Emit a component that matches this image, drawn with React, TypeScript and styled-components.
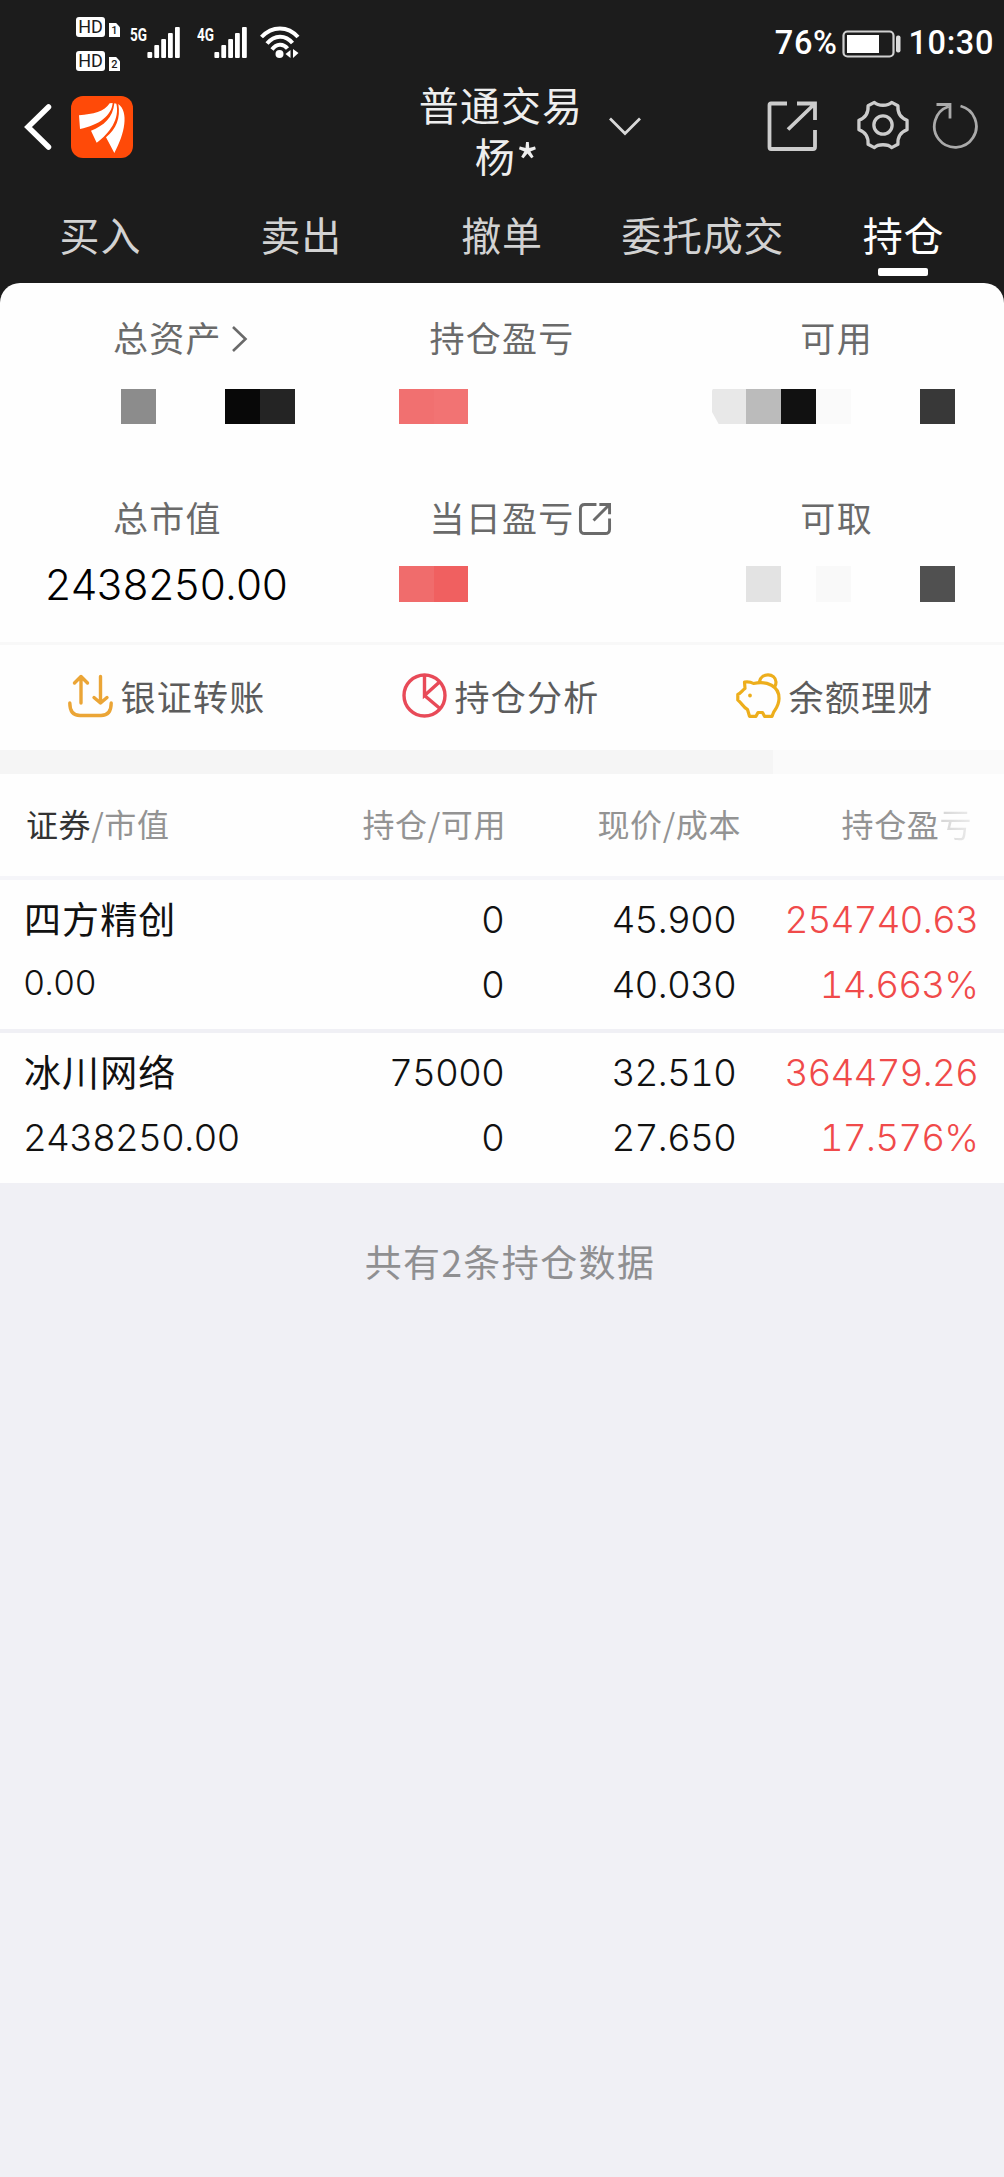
import React from "react";
import styled, { createGlobalStyle } from "styled-components";

const cjk = `"Noto Sans CJK SC", sans-serif`;
const digits = `Inter, "Noto Sans CJK SC", sans-serif`;

const GlobalStyle = createGlobalStyle`
  * { box-sizing: border-box; }
  body { margin: 0; background: #f0f0f5; }
`;

const Screen = styled.div`
  display: flex;
  flex-direction: column;
  width: 1004px;
  height: 2177px;
  overflow: hidden;
  background: #f0f0f5;
  font-family: ${cjk};
`;

const Top = styled.header`
  display: flex;
  flex-direction: column;
  height: 303px;
  flex: none;
  background: #1c1c1c;
  color: #fff;
`;

const StatusBar = styled.div`
  display: flex;
  justify-content: space-between;
  height: 80px;
  padding: 0 10px 0 76px;
`;

const StatusLeft = styled.div`
  display: flex;
  align-items: flex-start;
`;

const HdStack = styled.div`
  display: flex;
  flex-direction: column;
  gap: 14px;
  padding-top: 17px;
  margin-right: 10px;
`;

const HdLine = styled.div`
  display: flex;
  align-items: flex-end;
  gap: 4px;
  height: 20px;
`;

const HdBadge = styled.span`
  width: 29px;
  height: 20px;
  border-radius: 3px;
  background: #fff;
  color: #1c1c1c;
  font: 400 18px/20px Roboto, sans-serif;
  text-align: center;
`;

const SimBadge = styled.span`
  width: 11px;
  height: 14px;
  background: #fff;
  color: #1c1c1c;
  clip-path: polygon(0 0, 65% 0, 100% 30%, 100% 100%, 0 100%);
  font: 500 11px/15px Roboto, sans-serif;
  text-align: center;
`;

const StatusRight = styled.div`
  display: flex;
  align-items: center;
  height: 85px;
  font: 500 32.5px/38px Roboto, sans-serif;
  letter-spacing: 0.6px;
`;

const BatteryIcon = styled.svg`
  margin: 2px 8px 0 4px;
`;

const NavBar = styled.div`
  display: grid;
  grid-template-columns: 334px 334px 336px;
  height: 112px;
`;

const NavSide = styled.div`
  display: flex;
  align-items: flex-start;
`;

const BackIcon = styled.svg`
  margin: 24px 19px 0 24px;
`;

const LogoIcon = styled.svg`
  margin-top: 16px;
`;

const Title = styled.div`
  display: flex;
  flex-direction: column;
  align-items: center;
  font-size: 40px;
  line-height: 51px;
  letter-spacing: 1.1px;
  color: #eee;
`;

const TitleRow = styled.div`
  display: flex;
  height: 51px;
  margin-top: -1px;
`;

const TitleChevron = styled.svg`
  width: 34px;
  margin: 37px -59px 0 25px;
`;

const Owner = styled.span`
  padding-left: 13px;
`;

const Star = styled.span`
  font-size: 50px;
  line-height: 0;
  vertical-align: -10px;
`;

const NavActions = styled.div`
  display: flex;
  align-items: flex-start;
  padding: 19px 0 0 98px;
`;

const NavIcon = styled.svg<{ $left: number; $top?: number }>`
  flex: none;
  margin: ${(p) => p.$top ?? 0}px 0 0 ${(p) => p.$left}px;
`;

const Tabs = styled.nav`
  display: grid;
  grid-template-columns: repeat(5, 1fr);
  height: 91px;
`;

const Tab = styled.a<{ $active?: boolean }>`
  display: flex;
  flex-direction: column;
  align-items: center;
  padding-top: 14px;
  font-size: 40px;
  line-height: 56px;
  letter-spacing: 0.8px;
  color: ${(p) => (p.$active ? "#fff" : "#d2d2d2")};
  &::after {
    content: "";
    width: 50px;
    height: 8px;
    margin: 6px 2px 0 0;
    border-radius: 2px;
    background: ${(p) => (p.$active ? "#fff" : "transparent")};
  }
`;

const Card = styled.section`
  height: 362px;
  margin-top: -20px;
  flex: none;
  display: flex;
  flex-direction: column;
  border-radius: 20px 20px 0 0;
  background: #fefefe;
  border-bottom: 3px solid #f8f8f8;
`;

const StatRow = styled.div<{ $height: number }>`
  display: grid;
  grid-template-columns: repeat(3, 1fr);
  height: ${(p) => p.$height}px;
  padding-top: 31px;
`;

const Stat = styled.div`
  display: flex;
  flex-direction: column;
`;

const StatLabel = styled.div`
  display: flex;
  justify-content: center;
  height: 50px;
  font-size: 35px;
  line-height: 46px;
  letter-spacing: 1.3px;
  color: #6a6a6a;
`;

const LabelIcon = styled.span<{ $gap: number }>`
  display: flex;
  align-items: center;
  width: 0;
  svg {
    flex: none;
    margin-left: ${(p) => p.$gap}px;
  }
`;

const Figure = styled.span`
  font-feature-settings: "tnum";
`;

const Point = styled.span`
  font-feature-settings: normal;
`;

const StatValue = styled.div`
  height: 50px;
  margin-top: 16px;
  padding-right: 3px;
  font: 350 42px/50px ${digits};
  letter-spacing: -1.4px;
  text-align: center;
  color: #000;
`;

const Mosaic = styled.div<{ $left: number; $top: number }>`
  display: flex;
  height: 35.5px;
  margin-top: ${(p) => p.$top}px;
  padding-left: ${(p) => p.$left}px;
`;

const Block = styled.span<{ $color: string; $cut?: boolean }>`
  width: 34.75px;
  background: ${(p) => p.$color};
  clip-path: ${(p) => (p.$cut ? "polygon(4% 0, 100% 0, 100% 100%, 20% 100%, 0 65%, 0 8%)" : "none")};
`;

const Actions = styled.div`
  display: grid;
  grid-template-columns: repeat(3, 1fr);
  height: 105px;
  flex: none;
  padding: 0 2px 4px 0;
  background: #fefefe;
`;

const Action = styled.a`
  display: flex;
  justify-content: center;
  align-items: center;
  gap: 7px;
  font-size: 35px;
  line-height: 50px;
  letter-spacing: 1.3px;
  color: #5c5c5c;
  svg { flex: none; }
`;

const Band = styled.div`
  height: 24px;
  flex: none;
  background: linear-gradient(90deg, #f5f5f5 773px, #fafafa 773px);
`;

const TableGrid = styled.div`
  display: grid;
  grid-template-columns: 240px 240px 232px 242px;
  flex: none;
  background: #fefefe;
`;

const TableHead = styled(TableGrid)`
  grid-template-columns: 238px 242px 235px 237px;
  height: 106px;
  padding: 0 0 4px 26px;
  border-bottom: 4px solid #f5f5f9;
  align-items: center;
  font-size: 32px;
  line-height: 46px;
  letter-spacing: 0.6px;
  color: #939393;
`;

const HeadCell = styled.span<{ $right?: boolean; $shift?: number }>`
  text-align: ${(p) => (p.$right ? "right" : "left")};
  padding-right: ${(p) => p.$shift ?? 0}px;
`;

const Strong = styled.span`
  color: #333;
`;

const Faded = styled.span`
  background: linear-gradient(90deg, #d4d4d4, #ececec);
  background-clip: text;
  -webkit-background-clip: text;
  color: transparent;
`;

const HoldingRow = styled(TableGrid)<{ $last?: boolean }>`
  height: ${(p) => (p.$last ? 150 : 153)}px;
  padding: 7px 0 0 24px;
  border-bottom: ${(p) => (p.$last ? 0 : 4)}px solid #f0f0f5;
`;

const HoldingCell = styled.div<{ $left?: boolean; $red?: boolean }>`
  display: flex;
  flex-direction: column;
  text-align: ${(p) => (p.$left ? "left" : "right")};
  font: 350 37px/65px ${digits};
  letter-spacing: -0.95px;
  color: ${(p) => (p.$red ? "#f04a4a" : "#111")};
  white-space: nowrap;
`;

const StockName = styled.span`
  margin-bottom: 3px;
  font: 400 37px/62px ${cjk};
  letter-spacing: 1.1px;
  color: #111;
`;

const MarketValue = styled.span<{ $small?: boolean }>`
  margin-left: -1px;
  font-size: ${(p) => (p.$small ? 34.4 : 37)}px;
  line-height: ${(p) => (p.$small ? 62 : 65)}px;
`;

const Footer = styled.p`
  margin: 50px 0 0 16px;
  text-align: center;
  font: 400 37px/56px ${cjk};
  letter-spacing: 1.4px;
  color: #8f8f91;
`;

const SignalIcon = styled.svg`
  margin-top: 23px;
`;

const WifiIcon = styled.svg`
  margin: 25px 0 0 -4px;
`;

const Num = ({ children }: { children: string }) => (
  <Figure>
    {children.split(".").map((part, i) => (
      <React.Fragment key={i}>
        {i > 0 && <Point>.</Point>}
        {part}
      </React.Fragment>
    ))}
  </Figure>
);

const Signal = ({ label }: { label: string }) => (
  <SignalIcon width="67" height="40" viewBox="0 0 67 40">
    <text x="0" y="18" fill="#fff" fontFamily="Roboto" fontWeight="700" fontSize="19" textLength="17" lengthAdjust="spacingAndGlyphs">{label}</text>
    <g fill="#fff">
      <rect x="17.4" y="29" width="4.8" height="6" rx="1" />
      <rect x="24.3" y="22" width="4.8" height="13" rx="1" />
      <rect x="31.2" y="16" width="4.8" height="19" rx="1" />
      <rect x="38" y="10" width="4.8" height="25" rx="1" />
      <rect x="45" y="4" width="4.8" height="31" rx="1" />
    </g>
  </SignalIcon>
);

const Wifi = () => (
  <WifiIcon width="42" height="36" viewBox="0 0 42 36">
    <g fill="none" stroke="#fff" strokeWidth="4">
      <path d="M1.5 12C12 0.5 28 0.5 38 12" />
      <path d="M7 18.5C14.5 9.5 25.5 9.5 32.5 18" />
      <path d="M12 24.5C16.5 18.5 23 18 27.5 23.5" />
    </g>
    <circle cx="19.5" cy="29" r="4" fill="#fff" />
    <path d="M25.5 29L30.5 25V33Z M38.5 28L33 24V33Z" fill="#fff" />
  </WifiIcon>
);

const Logo = () => (
  <LogoIcon width="62" height="62" viewBox="214 290 186 186">
    <rect x="214" y="290" width="186" height="186" rx="36" fill="#ff4a08" />
    <g fill="#fff">
      <path d="M238 348C280 345 315 337 330 312L339 311C336 348 298 378 241 389Z" />
      <path d="M274 394C312 380 340 355 344 312L350 313C361 358 330 402 291 430Z" />
      <path d="M319 414C350 388 363 356 356 314C388 338 376 402 344 461Z" />
    </g>
  </LogoIcon>
);

const TransferIcon = () => (
  <svg width="45" height="44" viewBox="0 0 45 44" fill="none" stroke="#eba536" strokeWidth="3.4" strokeLinecap="round" strokeLinejoin="round">
    <path d="M1.8 29C1.8 37 5 41.5 12 41.5H33C40 41.5 43.2 37 43.2 29M13 29V2.5M6.5 9L13 2.5L19.5 9M32.5 2.5V29M26 23.5L32.5 29L39 23.5" />
  </svg>
);

const PieIcon = () => (
  <svg width="45" height="45" viewBox="0 0 45 45" fill="none" stroke="#e84a58" strokeWidth="3.4">
    <circle cx="22.5" cy="22.5" r="20.5" />
    <path d="M22.5 1.5V22.5L37.5 9M22.5 22.5L38.5 36" />
  </svg>
);

const PiggyIcon = () => (
  <svg width="45" height="45" viewBox="0 0 45 45" fill="none" stroke="#edae1c" strokeWidth="3.2" strokeLinejoin="round" strokeLinecap="round">
    <path d="M8.5 9C12 8.5 15 9 17.5 10.5C31 7.5 43.5 13 43 26C42.8 33 39 36.5 37.5 39.5L36 43.3H28.5L26.5 39.5H22L20 43.3H13.5L11.5 36.5C7 34.5 6 30 1.8 27V21.5C5 20 6 17.5 9 15.5Z" />
    <path d="M23.5 8.5C25 -0.5 39.5 -0.5 40 9C40 11 39.5 12.5 38.8 13.5" />
    <circle cx="14" cy="22.5" r="1" fill="#edae1c" strokeWidth="1.8" />
  </svg>
);

const Masked = ({ left, top, colors, cut }: { left: number; top: number; colors: string[]; cut?: boolean }) => (
  <Mosaic $left={left} $top={top}>
    {colors.map((c, i) => (
      <Block key={i} $color={c || "transparent"} $cut={cut && i === 0} />
    ))}
  </Mosaic>
);

const holdings = [
  { name: "四方精创", value: "0.00", held: "0", free: "0", price: "45.900", cost: "40.030", gain: "254740.63", rate: "14.663%" },
  { name: "冰川网络", value: "2438250.00", held: "75000", free: "0", price: "32.510", cost: "27.650", gain: "364479.26", rate: "17.576%" },
];

export default function App() {
  return (
    <Screen>
      <GlobalStyle />
      <Top>
        <StatusBar>
          <StatusLeft>
            <HdStack>
              <HdLine><HdBadge>HD</HdBadge><SimBadge>1</SimBadge></HdLine>
              <HdLine><HdBadge>HD</HdBadge><SimBadge>2</SimBadge></HdLine>
            </HdStack>
            <Signal label="5G" />
            <Signal label="4G" />
            <Wifi />
          </StatusLeft>
          <StatusRight>
            76%
            <BatteryIcon width="59" height="28" viewBox="0 0 59 28">
              <rect x="1.5" y="1.5" width="50" height="25" rx="4" fill="none" stroke="#d0d0d0" strokeWidth="2.2" />
              <rect x="5" y="5" width="32" height="18" fill="#fff" />
              <rect x="54" y="5.5" width="4.5" height="17" rx="2" fill="#ddd" />
            </BatteryIcon>
            10:30
          </StatusRight>
        </StatusBar>
        <NavBar>
          <NavSide>
            <BackIcon width="28" height="46" viewBox="0 0 28 46" fill="none" stroke="#fff" strokeWidth="5.5" strokeLinecap="round">
              <path d="M24.5 3L4 23L24.5 43" />
            </BackIcon>
            <Logo />
          </NavSide>
          <Title>
            <TitleRow>
              <span>普通交易</span>
              <TitleChevron width="34" height="20" viewBox="0 0 34 20" fill="none" stroke="#d8d8d8" strokeWidth="2.8">
                <path d="M2 2.5L17 17.5L32 2.5" />
              </TitleChevron>
            </TitleRow>
            <Owner>杨<Star>*</Star></Owner>
          </Title>
          <NavActions>
            <NavIcon $left={0} $top={1} width="52" height="52" viewBox="0 0 52 52" fill="none" stroke="#ccc" strokeWidth="3.8">
              <path d="M21 3.5H5Q3.5 3.5 3.5 5V47Q3.5 49 5 49H47Q49 49 49 47V30M31 3.5H49V20M49 3.5L22 29.5" />
            </NavIcon>
            <NavIcon $left={39} $top={0} width="52" height="52" viewBox="-27 -27 54 54" fill="none" stroke="#ccc" strokeWidth="3.4" strokeLinejoin="round">
              <circle r="9.5" />
              <path d="M-9 -23.5C-5 -19.5 5 -19.5 9 -23.5L15.5 -20C15 -12 18 -7.5 25 -5V5C18 7.5 15 12 15.5 20L9 23.5C5 19.5 -5 19.5 -9 23.5L-15.5 20C-15 12 -18 7.5 -25 5V-5C-18 -7.5 -15 -12 -15.5 -20Z" />
            </NavIcon>
            <NavIcon $left={22} $top={2} width="50" height="50" viewBox="0 0 50 50" fill="none" stroke="#aaa" strokeWidth="2.8">
              <path d="M29.5 5A21 21 0 1 1 17.5 5.5M5.5 3.5H19V17.5" />
            </NavIcon>
          </NavActions>
        </NavBar>
        <Tabs>
          <Tab>买入</Tab>
          <Tab>卖出</Tab>
          <Tab>撤单</Tab>
          <Tab>委托成交</Tab>
          <Tab $active>持仓</Tab>
        </Tabs>
      </Top>
      <Card>
        <StatRow $height={180}>
          <Stat>
            <StatLabel>
              总资产
              <LabelIcon $gap={8}>
                <svg width="18" height="28" viewBox="0 0 18 28" fill="none" stroke="#6a6a6a" strokeWidth="2.6"><path d="M3 2L15.5 14L3 26" /></svg>
              </LabelIcon>
            </StatLabel>
            <Masked left={121} top={24.5} colors={["#8c8c8c", "", "", "#080808", "#242424"]} />
          </Stat>
          <Stat>
            <StatLabel>持仓盈亏</StatLabel>
            <Masked left={64.3} top={24.5} colors={["#f17070", "#f27373"]} />
          </Stat>
          <Stat>
            <StatLabel>可用</StatLabel>
            <Masked left={42.4} top={24.5} cut colors={["#e8e8e8", "#bbb", "#111", "#fafafa", "", "", "#383838"]} />
          </Stat>
        </StatRow>
        <StatRow $height={177}>
          <Stat>
            <StatLabel>总市值</StatLabel>
            <StatValue><Num>2438250.00</Num></StatValue>
          </Stat>
          <Stat>
            <StatLabel>
              当日盈亏
              <LabelIcon $gap={3}>
                <svg width="34" height="34" viewBox="0 0 35 35" fill="none" stroke="#6a6a6a" strokeWidth="3">
                  <path d="M19 2.5H7Q2.5 2.5 2.5 7V28Q2.5 32.5 7 32.5H28Q32.5 32.5 32.5 28V17M22 2.5H32.5V12.5M32.5 2.5L16 19" />
                </svg>
              </LabelIcon>
            </StatLabel>
            <Masked left={64.3} top={22} colors={["#f06c6c", "#f06060"]} />
          </Stat>
          <Stat>
            <StatLabel>可取</StatLabel>
            <Masked left={42.4} top={22} colors={["", "#e3e3e3", "", "#f9f9f9", "", "", "#505050"]} />
          </Stat>
        </StatRow>
      </Card>
      <Actions>
        <Action><TransferIcon />银证转账</Action>
        <Action><PieIcon />持仓分析</Action>
        <Action><PiggyIcon />余额理财</Action>
      </Actions>
      <Band />
      <TableHead>
        <HeadCell><Strong>证券</Strong>/市值</HeadCell>
        <HeadCell $right>持仓/可用</HeadCell>
        <HeadCell $right>现价/成本</HeadCell>
        <HeadCell $right $shift={6}>持仓盈<Faded>亏</Faded></HeadCell>
      </TableHead>
      {holdings.map((h, i) => (
        <HoldingRow key={h.name} $last={i === holdings.length - 1}>
          <HoldingCell $left>
            <StockName>{h.name}</StockName>
            <MarketValue $small={h.value === "0.00"}><Num>{h.value}</Num></MarketValue>
          </HoldingCell>
          <HoldingCell><Num>{h.held}</Num><Num>{h.free}</Num></HoldingCell>
          <HoldingCell><Num>{h.price}</Num><Num>{h.cost}</Num></HoldingCell>
          <HoldingCell $red><Num>{h.gain}</Num><Num>{h.rate}</Num></HoldingCell>
        </HoldingRow>
      ))}
      <Footer>共有2条持仓数据</Footer>
    </Screen>
  );
}
